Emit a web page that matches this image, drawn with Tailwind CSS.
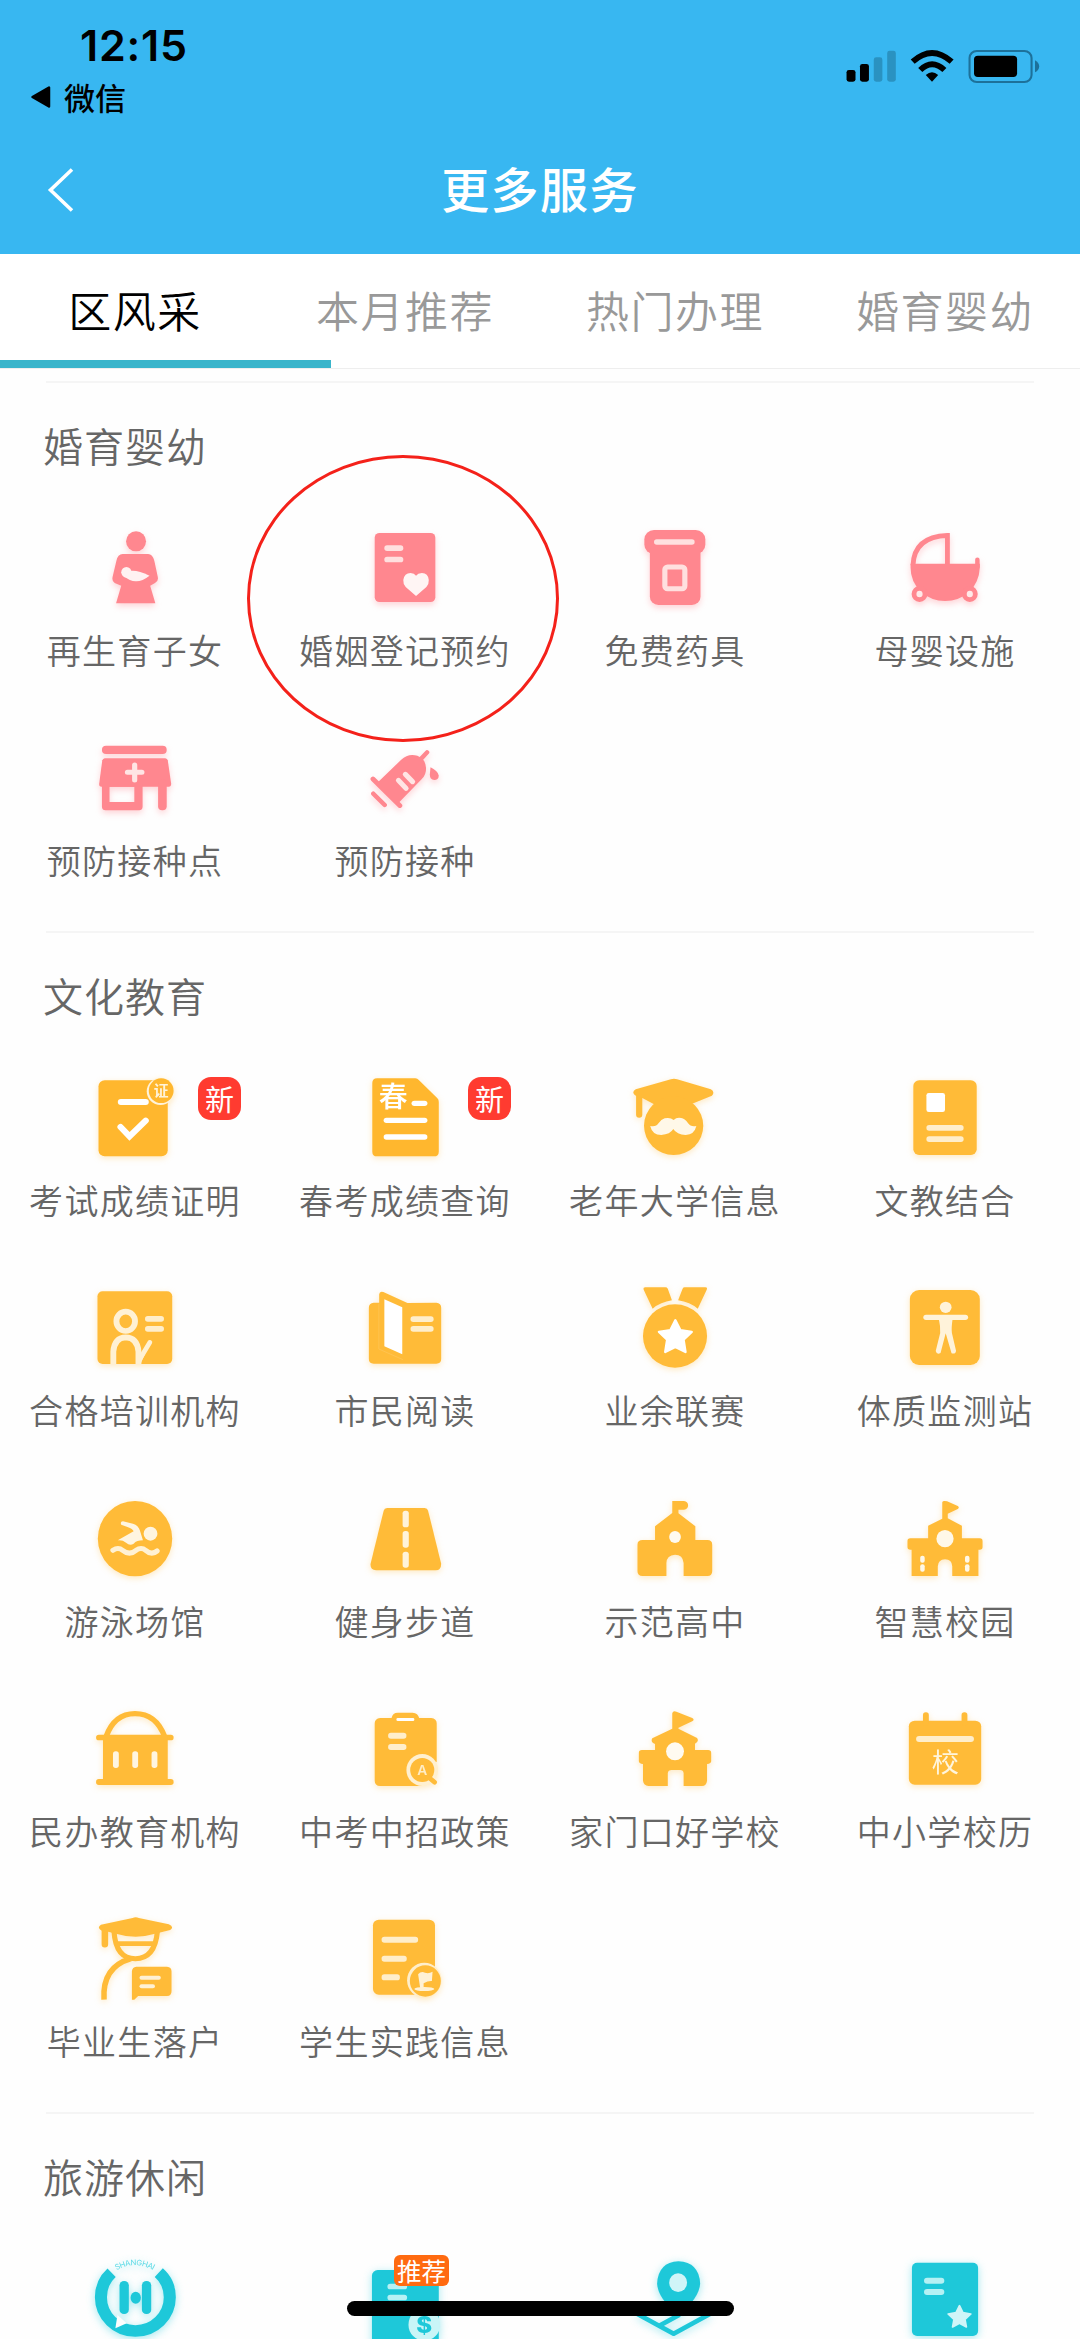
<!DOCTYPE html>
<html lang="zh-CN">
<head>
<meta charset="utf-8">
<meta name="viewport" content="width=1080">
<title>更多服务</title>
<script src="https://cdn.jsdelivr.net/npm/@tailwindcss/browser@4"></script>
</head>
<body class="bg-white">
<div class="relative flex h-[2339px] w-[1080px] flex-col overflow-hidden bg-[#fefefe] font-['Noto_Sans_CJK_SC',sans-serif] text-[#666]">

<header class="h-[254px] shrink-0 bg-[#38b7f1]">
  <div class="flex h-[126px] justify-between">
    <div class="pt-[22px]">
      <div class="pl-[80px] font-['Inter',sans-serif] text-[43px] leading-[46px] font-semibold tracking-[0.800px] text-black">12:15</div>
      <div class="flex items-center gap-[13px] pt-[9px] pl-[31px] text-[31px] leading-[40px] font-medium text-black">
        <svg class="h-[22px] w-[20px]" viewBox="0 0 20 22"><path d="M18 1.5v19L1.5 11Z" stroke="#000" stroke-width="2.5" stroke-linejoin="round"/></svg>
        <span>微信</span>
      </div>
    </div>
    <svg class="mt-[45px] mr-[35px] h-[42px] w-[205px]" viewBox="871 135 595 126" preserveAspectRatio="none">
      <rect x="890" y="210" width="26" height="35" rx="7"/><rect x="929" y="192" width="26" height="53" rx="7"/>
      <g fill="#2a92c1"><rect x="969" y="172" width="25" height="73" rx="7"/><rect x="1008" y="152" width="25" height="93" rx="7"/></g>
      <g fill="none" stroke="#000" stroke-width="17"><path d="M1082 185Q1138 133 1195 185"/><path d="M1104 210Q1138 176 1174 210"/></g>
      <path d="M1120 225Q1138 209 1156 225L1138 245Z"/>
      <rect x="1247" y="153" width="180" height="93" rx="21" fill="none" stroke="#1d719a" stroke-width="6"/>
      <rect x="1260" y="167" width="125" height="64" rx="11"/><path d="M1437 181Q1449 188 1449 199Q1449 211 1437 217Z" fill="#1d719a"/>
    </svg>
  </div>
  <div class="relative flex h-[128px] justify-center pt-[31px]">
    <svg class="absolute top-[42px] left-[46px] h-[44px] w-[28px]" viewBox="0 0 28 44"><path d="M26 1.500L4.500 22L26 42.500" fill="none" stroke="#fff" stroke-width="3.600"/></svg>
    <h1 class="text-[48px] leading-[60px] font-medium tracking-[1.4px] text-white">更多服务</h1>
  </div>
</header>

<nav class="relative grid h-[115px] shrink-0 grid-cols-4 border-b border-[#eee] bg-white text-center text-[43px] leading-[110px] font-[350] tracking-[1.5px] text-[#999]">
  <span class="text-black">区风采</span><span>本月推荐</span><span>热门办理</span><span>婚育婴幼</span>
  <i class="absolute top-[106px] left-0 h-[8px] w-[331px] bg-[#3ab5cb]"></i>
</nav>

<main class="pt-[12px]">
<section class="mb-[17.400px]">
  <h2 class="mx-[46px] h-[112px] border-t-2 border-[#f5f5f5] pt-[34px] -indent-[3px] text-[40px] leading-[56px] font-[350] tracking-[1px]">婚育婴幼</h2>
  <div class="grid auto-rows-[210.300px] grid-cols-4 text-[34px] leading-[40px] font-[350] tracking-[1.300px] text-[#666] [&_svg]:mb-[18px] [&_svg]:size-[90px] [&_svg]:drop-shadow-[0_3px_3px_rgba(255,135,143,0.350)] [&>div]:flex [&>div]:flex-col [&>div]:items-center [&>div]:pt-[29px]">
    <div><svg viewBox="261.300 366 261.300 270" preserveAspectRatio="none" fill="#ff878f">
      <ellipse cx="395" cy="424" rx="29" ry="30"/><path d="M356 462H430Q443 463 448 482L458 530Q461 543 450 549L436 557L451 610H337L352 557L333 549Q324 543 327 530L338 482Q342 463 356 462Z"/>
      <g fill="#fff2f2"><ellipse cx="367" cy="517" rx="15" ry="16"/><path d="M378 513Q400 510 434 527Q412 545 394 544Q376 542 362 530Z"/></g></svg><span>再生育子女</span></div>
    <div><svg viewBox="1045.300 366 261.300 270" preserveAspectRatio="none" fill="#ff878f">
      <rect x="1088" y="399" width="176" height="207" rx="14"/><g fill="#ffe0df"><rect x="1116" y="436" width="55" height="17" rx="8"/><rect x="1116" y="470" width="55" height="17" rx="8"/></g>
      <path fill="#fff5f4" d="M1208 588L1178 561Q1170 551 1171 540Q1174 519 1192 519Q1203 520 1208 527Q1213 520 1225 519Q1243 519 1245 540Q1246 551 1238 561Z"/></svg><span>婚姻登记预约</span></div>
    <div><svg viewBox="261.300 366 261.300 270" preserveAspectRatio="none" fill="#ff878f">
      <rect x="303" y="390" width="177" height="72" rx="28"/><rect x="319" y="430" width="147" height="185" rx="25"/><rect x="331" y="418" width="118" height="16" rx="8" fill="#ffe0df"/>
      <rect x="362.500" y="501" width="58" height="65" rx="8" fill="none" stroke="#ffe0df" stroke-width="15"/></svg><span>免费药具</span></div>
    <div><svg viewBox="1045.300 366 261.300 270" preserveAspectRatio="none" fill="#ff878f">
      <path d="M1083 496Q1086 410 1183 406V496" fill="none" stroke="#ff878f" stroke-width="14"/><path d="M1076 491H1277V503Q1275 545 1247 575Q1216 603 1176 603Q1137 603 1106 575Q1076 544 1076 503Z"/>
      <path d="M1270 479V500" stroke="#ff878f" stroke-width="13" stroke-linecap="round"/>
      <g stroke="#ff878f" stroke-width="14" fill="#ffe9e8"><ellipse cx="1102" cy="582" rx="16" ry="17"/><ellipse cx="1248" cy="582" rx="16" ry="17"/></g></svg><span>母婴设施</span></div>
    <div><svg viewBox="261.300 997 261.300 270" preserveAspectRatio="none" fill="#ff878f">
      <rect x="296" y="1038" width="188" height="25" rx="12"/><path d="M304 1076H480Q486 1077 487 1082L497 1152Q497 1161 490 1161H295Q287 1161 288 1152L297 1082Q299 1077 304 1076Z"/>
      <path fill-rule="evenodd" d="M296 1155H414V1222Q413 1232 404 1232H306Q297 1232 296 1222ZM318 1161V1207H390V1161Z"/><rect x="459" y="1140" width="25" height="92" rx="12"/>
      <path d="M391 1096V1141M370 1118H412" stroke="#ffe5e4" stroke-width="15" stroke-linecap="round"/></svg><span>预防接种点</span></div>
    <div><svg viewBox="1045.300 997 261.300 270" preserveAspectRatio="none" fill="#ff878f">
      <g stroke="#ff878f" stroke-linecap="round"><path d="M1084 1182L1117 1216" stroke-width="13"/><path d="M1083 1138L1161 1218" stroke-width="14"/><path d="M1222 1078L1240 1058" stroke-width="13"/></g>
      <path d="M1098 1147L1165 1080Q1185 1060 1212 1068Q1236 1078 1237 1105Q1238 1125 1224 1139L1157 1210Z"/><path d="M1250 1103Q1273 1115 1274 1128Q1273 1141 1261 1141Q1248 1139 1248 1125Z"/>
      <path d="M1157 1142L1179 1166M1177 1124L1198 1146" stroke="#ffe5e4" stroke-width="15" stroke-linecap="round"/></svg><span>预防接种</span></div>
  </div>
</section>

<section class="mb-[17.400px]">
  <h2 class="mx-[46px] h-[112px] border-t-2 border-[#f5f5f5] pt-[34px] -indent-[3px] text-[40px] leading-[56px] font-[350] tracking-[1px]">文化教育</h2>
  <div class="grid auto-rows-[210.300px] grid-cols-4 text-[34px] leading-[40px] font-[350] tracking-[1.300px] text-[#666] [&_svg]:mb-[18px] [&_svg]:size-[90px] [&_svg]:drop-shadow-[0_2px_3px_rgba(255,187,56,0.300)] [&>div]:relative [&>div]:flex [&>div]:flex-col [&>div]:items-center [&>div]:pt-[29px]">
    <div><svg viewBox="261.300 396 261.300 270" preserveAspectRatio="none" fill="#ffb72e">
      <rect x="286" y="421" width="201" height="228" rx="18"/><ellipse cx="466" cy="454" rx="40" ry="41" fill="#fff3da"/><ellipse cx="468" cy="452" rx="36" ry="37"/>
      <text x="468" y="468" text-anchor="middle" font-size="43" font-weight="700" letter-spacing="0" fill="#fff3da">证</text>
      <rect x="342" y="477" width="90" height="18" rx="9" fill="#fff"/><path d="M350 561L376 589L423 542" fill="none" stroke="#fff" stroke-width="18" stroke-linecap="round"/></svg><span>考试成绩证明</span>
      <b class="absolute top-[34px] left-[198px] flex size-[43px] items-center justify-center rounded-[13px] bg-[#ff3b30] text-[29px] font-normal tracking-normal text-white">新</b></div>
    <div><svg viewBox="1045.300 396 261.300 270" preserveAspectRatio="none" fill="#ffb72e">
      <path d="M1095 415H1206Q1212 416 1216 420L1270 475Q1274 479 1274 486V635Q1274 649 1260 649H1095Q1081 649 1081 635V429Q1081 415 1095 415Z"/>
      <text x="1142" y="502" text-anchor="middle" font-size="84" font-weight="500" letter-spacing="0" fill="#fff">春</text>
      <g fill="#fff"><rect x="1195" y="482" width="46" height="16" rx="8"/><rect x="1114" y="533" width="127" height="16" rx="8"/><rect x="1114" y="583" width="127" height="16" rx="8"/></g></svg><span>春考成绩查询</span>
      <b class="absolute top-[34px] left-[198px] flex size-[43px] items-center justify-center rounded-[13px] bg-[#ff3b30] text-[29px] font-normal tracking-normal text-white">新</b></div>
    <div><svg viewBox="261.300 396 261.300 270" preserveAspectRatio="none" fill="#ffbb38">
      <path d="M380 418Q389 414 398 418L496 448Q509 456 499 467L440 492H330L297 474V524a9 9 0 0 1-18 0V468Q263 458 278 448Z"/><ellipse cx="388" cy="557" rx="86" ry="88"/>
      <path fill="#fff8e8" d="M388 540Q378 531 362 535Q352 538 344 550Q337 562 320 558Q326 585 352 585Q378 583 387 567Q397 584 423 585Q448 584 454 558Q438 562 430 550Q420 535 410 534Q397 531 388 540Z"/></svg><span>老年大学信息</span></div>
    <div><svg viewBox="1045.300 396 261.300 270" preserveAspectRatio="none" fill="#ffbb38">
      <rect x="1084" y="421" width="184" height="224" rx="17"/><rect x="1122" y="459" width="54" height="57" rx="7" fill="#fff"/><g fill="#ffeecb"><rect x="1122" y="555" width="108" height="17" rx="8"/><rect x="1122" y="589" width="108" height="17" rx="8"/></g></svg><span>文教结合</span></div>

    <div><svg viewBox="261.300 1027 261.300 270" preserveAspectRatio="none" fill="#ffbb38">
      <rect x="283" y="1055" width="217" height="218" rx="15"/><g fill="none" stroke="#fff1d4" stroke-width="17"><ellipse cx="365" cy="1145" rx="27" ry="29"/><path d="M329 1273V1236Q332 1194 365 1193Q399 1194 402 1236V1273"/><path d="M405 1260L435 1208" stroke-linecap="round" stroke-width="14"/></g><path fill="#fff1d4" d="M396 1273V1230L420 1245L408 1273Z"/>
      <g fill="#ffeecb"><rect x="421" y="1129" width="55" height="17" rx="8"/><rect x="421" y="1159" width="55" height="17" rx="8"/></g></svg><span>合格培训机构</span></div>
    <div><svg viewBox="1045.300 1027 261.300 270" preserveAspectRatio="none" fill="#ffbb38">
      <path d="M1085 1089H1101V1064Q1102 1053 1113 1057L1183 1090L1267 1089Q1281 1090 1281 1104V1258Q1281 1272 1267 1272H1085Q1071 1272 1071 1258V1104Q1071 1090 1085 1089Z"/>
      <path d="M1116 1079L1168 1103V1244L1116 1220Z" fill="#fff"/><path d="M1100 1092V1228L1170 1260" fill="none" stroke="#ffc75b" stroke-width="2"/>
      <g fill="#ffeecb"><rect x="1192" y="1130" width="67" height="17" rx="8"/><rect x="1192" y="1159" width="67" height="17" rx="8"/></g></svg><span>市民阅读</span></div>
    <div><svg viewBox="261.300 1027 261.300 270" preserveAspectRatio="none" fill="#ffbb38">
      <path d="M301 1050Q299 1043 306 1043H364Q369 1043 371 1047L383 1082Q350 1087 327 1107ZM420 1043H480Q487 1043 484 1050L458 1107Q436 1088 401 1082L414 1047Q416 1043 420 1043Z"/><ellipse cx="392" cy="1189" rx="93" ry="95"/>
      <path fill="#fff" stroke="#fff" stroke-width="7" stroke-linejoin="round" d="M393 1142L407.700 1171.800L440.600 1176.500L416.800 1199.700L422.400 1237L393 1222L363.600 1237L369.200 1199.700L345.400 1176.500L378.300 1171.800Z"/></svg><span>业余联赛</span></div>
    <div><svg viewBox="1045.300 1027 261.300 270" preserveAspectRatio="none" fill="#ffbb38">
      <rect x="1074" y="1051" width="203" height="225" rx="27"/><g fill="#fff3da"><ellipse cx="1178" cy="1103" rx="17" ry="17"/><rect x="1113" y="1125" width="130" height="16" rx="8"/><path d="M1158 1138H1198Q1194 1165 1196 1180L1208 1233Q1207 1244 1195 1241L1178 1181L1163 1240Q1152 1246 1149 1234L1162 1180Q1163 1160 1158 1138Z"/></g></svg><span>体质监测站</span></div>

    <div><svg viewBox="261.300 158 261.300 270" preserveAspectRatio="none" fill="#ffbb38">
      <ellipse cx="392" cy="295" rx="108" ry="113"/><g fill="#fff5e0"><ellipse cx="437" cy="280" rx="20" ry="21"/><path d="M357 243L386 250Q402 255 406 270L415 300Q397 300 388 310Q377 318 366 307Q355 298 342 300L388 273Q386 266 370 260L352 253Q348 244 357 243Z"/></g>
      <path d="M328 330Q343 319 356 330Q376 347 395 330Q410 319 423 330Q440 346 456 332" fill="none" stroke="#fff1d4" stroke-width="15" stroke-linecap="round"/></svg><span>游泳场馆</span></div>
    <div><svg viewBox="1045.300 158 261.300 270" preserveAspectRatio="none" fill="#ffbb38">
      <path d="M1124 203H1233Q1241 203 1243 211L1281 370Q1281 389 1265 390H1092Q1074 389 1076 370L1114 211Q1116 203 1124 203Z"/><g fill="#fff3da"><rect x="1169" y="211" width="18" height="50" rx="8"/><rect x="1169" y="272" width="18" height="50" rx="8"/><rect x="1169" y="334" width="18" height="48" rx="8"/></g></svg><span>健身步道</span></div>
    <div><svg viewBox="261.300 158 261.300 270" preserveAspectRatio="none" fill="#ffbb38">
      <path d="M384 182H418Q430 184 430 195Q430 207 418 208H402V219L451 258V299H486Q500 299 500 313V393Q500 407 486 407H417V368Q415 343 392 343Q368 344 367 368V407H298Q283 407 283 393V313Q283 299 298 299H334V258L384 218Z"/><ellipse cx="392" cy="290" rx="17" ry="18" fill="#fffaf0"/></svg><span>示范高中</span></div>
    <div><svg viewBox="1045.300 158 261.300 270" preserveAspectRatio="none" fill="#ffbb38">
      <path d="M1168 186Q1169 180 1182 183L1213 197Q1219 201 1213 206L1184 220V234L1225 256V294H1277Q1285 294 1285 302V320Q1285 328 1277 328H1273V407H1197V378Q1196 357 1176 357Q1156 358 1155 378V407H1079V328Q1067 330 1067 320V302Q1067 294 1075 294H1127V256L1168 235Z"/><g fill="#fff8e8"><ellipse cx="1176" cy="295" rx="25" ry="26"/><rect x="1104" y="346" width="13" height="21" rx="6"/><rect x="1104" y="372" width="13" height="22" rx="6"/><rect x="1234" y="346" width="13" height="21" rx="6"/><rect x="1234" y="372" width="13" height="22" rx="6"/></g></svg><span>智慧校园</span></div>

    <div><svg viewBox="261.300 789 261.300 270" preserveAspectRatio="none" fill="#ffbb38">
      <path d="M308 890Q332 821 392 821Q453 821 478 890" fill="none" stroke="#ffbb38" stroke-width="16"/><rect x="279" y="884" width="225" height="17" rx="8"/><rect x="299" y="888" width="188" height="142"/><rect x="279" y="1017" width="225" height="18" rx="8"/>
      <g fill="#fff5e0"><rect x="328" y="934" width="17" height="50" rx="8"/><rect x="384" y="934" width="17" height="50" rx="8"/><rect x="440" y="934" width="17" height="50" rx="8"/></g></svg><span>民办教育机构</span></div>
    <div><svg viewBox="1045.300 789 261.300 270" preserveAspectRatio="none" fill="#ffbb38">
      <path d="M1104 834H1137Q1140 818 1155 818H1198Q1214 819 1217 834H1252Q1268 836 1268 850V965L1226 990V1038H1104Q1088 1037 1088 1022V850Q1088 836 1104 834Z"/><rect x="1151" y="834" width="52" height="9" rx="4" fill="#fff"/>
      <g fill="#ffeecb"><rect x="1127" y="878" width="53" height="18" rx="8"/><rect x="1127" y="912" width="53" height="18" rx="8"/></g>
      <ellipse cx="1226" cy="990" rx="46" ry="48" fill="#fff0d0"/><ellipse cx="1226" cy="990" rx="35" ry="36"/><path d="M1240 1008L1262 1027" stroke="#ffbb38" stroke-width="14" stroke-linecap="round"/>
      <text x="1226" y="1005" text-anchor="middle" font-family="Inter,sans-serif" font-size="40" font-weight="600" letter-spacing="0" fill="#ffedc6">A</text></svg><span>中考中招政策</span></div>
    <div><svg viewBox="261.300 789 261.300 270" preserveAspectRatio="none" fill="#ffbb38">
      <path d="M384 820Q386 811 396 815L442 834Q450 839 442 844L402 863V866L456 894Q463 904 450 911V930H488Q497 930 497 938V964Q497 971 485 972V1022Q483 1038 470 1038H417V1000Q416 990 407 990H382Q372 990 371 1000V1038H315Q301 1036 299 1022V972Q287 971 287 964V938Q287 930 296 930H334V912Q320 906 326 895L384 866Z"/><ellipse cx="392" cy="934" rx="26" ry="27" fill="#fffaf0"/></svg><span>家门口好学校</span></div>
    <div><svg viewBox="1045.300 789 261.300 270" preserveAspectRatio="none" fill="#ffbb38">
      <rect x="1071" y="842" width="210" height="192" rx="17"/><rect x="1112" y="817" width="17" height="40" rx="8"/><rect x="1224" y="817" width="17" height="40" rx="8"/><rect x="1092" y="888" width="168" height="18" rx="9" fill="#ffeecb"/>
      <text x="1177" y="996" text-anchor="middle" font-size="79" font-weight="400" letter-spacing="0" fill="#fff5dd">校</text></svg><span>中小学校历</span></div>

    <div><svg viewBox="261.300 100 261.300 270" preserveAspectRatio="none" fill="#ffbb38">
      <path d="M385 115Q394 111 403 115L490 134Q507 142 494 151L450 162Q420 171 394 171Q365 171 337 162L314 156V194a9 9 0 0 1-19 0V153Q280 144 293 135Z"/>
      <g fill="none" stroke="#ffbb38"><path d="M331 155Q336 237 393 237Q450 237 457 155" stroke-width="15"/><path d="M334 192H452" stroke-width="14"/><path d="M380 237Q296 262 302 360" stroke-width="16"/></g>
      <path d="M396 261H485Q498 262 498 275V335Q498 349 485 349H401L390 360H383V275Q384 262 396 261Z"/><g fill="#fff1d4"><rect x="405" y="288" width="62" height="12" rx="6"/><rect x="405" y="314" width="45" height="12" rx="6"/></g></svg><span>毕业生落户</span></div>
    <div><svg viewBox="1045.300 100 261.300 270" preserveAspectRatio="none" fill="#ffbb38">
      <rect x="1083" y="120" width="180" height="225" rx="17"/><g fill="#ffeecb"><rect x="1108" y="171" width="106" height="18" rx="8"/><rect x="1108" y="228" width="73" height="18" rx="8"/><rect x="1108" y="284" width="53" height="18" rx="8"/><ellipse cx="1232" cy="302" rx="50" ry="53"/></g><ellipse cx="1235" cy="304" rx="45" ry="47"/>
      <path fill="#fff1d4" d="M1214 284Q1222 274 1234 279Q1245 283 1256 276L1254 304Q1243 303 1230 311V325H1220Z"/><ellipse cx="1232" cy="328" rx="29" ry="6" fill="#fff1d4"/></svg><span>学生实践信息</span></div>
  </div>
</section>

<section>
  <h2 class="mx-[46px] h-[112px] border-t-2 border-[#f5f5f5] pt-[34px] -indent-[3px] text-[40px] leading-[56px] font-[350] tracking-[1px]">旅游休闲</h2>
  <div class="grid auto-rows-[210.300px] grid-cols-4 [&_svg]:size-[90px] [&_svg]:drop-shadow-[0_2px_4px_rgba(30,200,217,0.400)] [&>div]:relative [&>div]:flex [&>div]:flex-col [&>div]:items-center [&>div]:pt-[29px]">
    <div><svg viewBox="261.300 1119 261.300 270" preserveAspectRatio="none" fill="#1ec8d9">
      <path d="M324 1178Q293 1207 293 1252A100 101 0 0 0 493 1252Q493 1207 461 1178" fill="none" stroke="#1ec8d9" stroke-width="35"/><path d="M335 1345L341 1305L368 1330Z" fill="#fdfdfd"/>
      <rect x="347" y="1203" width="27" height="99" rx="13"/><rect x="412" y="1203" width="27" height="99" rx="13"/><ellipse cx="394" cy="1253" rx="15" ry="18"/>
      <path id="arc" d="M338 1171Q391 1140 446 1171" fill="none"/><text font-family="Inter,sans-serif" font-size="23" fill="#5fdbe6"><textPath href="#arc" textLength="112">SHANGHAI</textPath></text></svg></div>
    <div><svg viewBox="1045.300 1119 261.300 270" preserveAspectRatio="none" fill="#1ec8d9">
      <rect x="1080" y="1170" width="194" height="230" rx="17"/><g fill="#b5f1f4"><rect x="1125" y="1211" width="57" height="17" rx="8"/><rect x="1125" y="1244" width="57" height="17" rx="8"/></g><ellipse cx="1232" cy="1334" rx="46" ry="48" fill="#c9f5f7"/>
      <text x="1232" y="1359" text-anchor="middle" font-family="Inter,sans-serif" font-size="70" font-weight="800">$</text></svg>
      <b class="absolute top-[31px] left-[124px] flex h-[31px] w-[55px] items-center justify-center rounded-[6px] bg-[#ff6a10] text-[24.500px] leading-[31px] font-normal text-white">推荐</b></div>
    <div><svg viewBox="261.300 1119 261.300 270" preserveAspectRatio="none" fill="#1ec8d9">
      <path d="M402 1144Q462 1147 465 1211Q462 1255 402 1305Q342 1255 340 1211Q343 1147 402 1144Z"/><ellipse cx="401" cy="1208" rx="26" ry="28" fill="#d0f5f8"/><path d="M283 1302L388 1361L493 1302M345 1338L405 1304" fill="none" stroke="#1ec8d9" stroke-width="14" stroke-linejoin="round"/></svg></div>
    <div><svg viewBox="1045.300 1119 261.300 270" preserveAspectRatio="none" fill="#1ec8d9">
      <rect x="1080" y="1148" width="192" height="220" rx="15"/><g fill="#b5f1f4"><rect x="1115" y="1193" width="59" height="18" rx="9"/><rect x="1115" y="1227" width="59" height="18" rx="9"/></g>
      <path fill="#d0f5f8" stroke="#d0f5f8" stroke-width="5" stroke-linejoin="round" d="M1218 1277L1228 1298L1251 1302L1234 1318L1238 1341L1218 1330L1198 1341L1202 1318L1185 1302L1208 1298Z"/></svg></div>
  </div>
</section>
</main>

<!-- Hand-drawn highlight around the marriage registration entry -->
<div class="absolute top-[455px] left-[247px] h-[287px] w-[312px] rounded-[50%] border-[3px] border-[#f4211a]"></div>
<!-- Home indicator -->
<div class="absolute top-[2301px] left-[347px] h-[15px] w-[387px] rounded-full bg-black"></div>
</div>
</body>
</html>
